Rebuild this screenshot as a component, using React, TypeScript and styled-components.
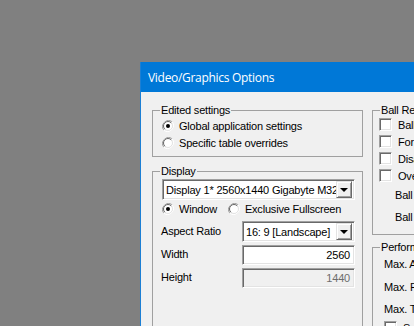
import styled, { createGlobalStyle } from "styled-components";

const GlobalStyle = createGlobalStyle`
    html, body {
        margin: 0;
        padding: 0;
        background: #808080;
        overflow: hidden;
    }
    * {
        box-sizing: border-box;
    }
`;

const Desktop = styled.div`
    width: 414px;
    height: 326px;
    padding: 62px 0 0 140px;
    overflow: hidden;
    font-family: "Liberation Sans", Arial, sans-serif;
    font-size: 11px;
    letter-spacing: -0.2px;
    color: #000;
`;

const Window = styled.div`
    width: 420px;
    height: 360px;
    display: flex;
    flex-direction: column;
    background: #f0f0f0;
    border-left: 1px solid #1c7fd4;
`;

const TitleBar = styled.div`
    height: 30px;
    flex: none;
    display: flex;
    align-items: center;
    padding-left: 7px;
    background: #0078d7;
    color: #fff;
    font-family: "Open Sans", "Noto Sans", sans-serif;
    font-size: 12px;
    letter-spacing: -0.3px;
`;

const Client = styled.div`
    display: flex;
    align-items: flex-start;
    gap: 9px;
    padding: 18px 0 0 11px;
`;

const Column = styled.div<{ width: number }>`
    width: ${p => p.width}px;
    flex: none;
    display: flex;
    flex-direction: column;
    gap: 14px;
`;

const RightColumn = styled(Column)`
    gap: 12px;
`;

const GroupBox = styled.div<{ pad?: string }>`
    position: relative;
    border: 1px solid #a0a0a0;
    padding: ${p => p.pad || "6px 7px 5px 9px"};
    display: flex;
    flex-direction: column;
`;

const Legend = styled.span`
    position: absolute;
    top: -7px;
    left: 7px;
    padding: 0 1px;
    line-height: 13px;
    background: #f0f0f0;
    white-space: nowrap;
`;

const OptionRow = styled.label<{ h?: number }>`
    display: flex;
    align-items: center;
    height: ${p => p.h || 17}px;
    gap: 5px;
    white-space: nowrap;
`;

const InlineOptions = styled.div`
    display: flex;
    gap: 11px;
`;

const Combo = styled.div<{ width: number }>`
    width: ${p => p.width}px;
    height: 21px;
    flex: none;
    display: flex;
    align-items: center;
    background: #fff;
    border-style: solid;
    border-width: 1px;
    border-color: #a0a0a0 #fff #fff #a0a0a0;
    box-shadow: inset 1px 1px 0 #696969, inset -1px -1px 0 #e3e3e3;
    padding: 2px 2px 2px 3px;
    overflow: hidden;
`;

const ComboText = styled.span`
    flex: 1;
    overflow: hidden;
    white-space: nowrap;
`;

const ComboButton = styled.span`
    width: 16px;
    height: 17px;
    flex: none;
    display: flex;
    align-items: center;
    justify-content: center;
    background: #f0f0f0;
    border-style: solid;
    border-width: 1px;
    border-color: #e3e3e3 #696969 #696969 #e3e3e3;
    box-shadow: inset 1px 1px 0 #fff, inset -1px -1px 0 #a0a0a0;

    &::after {
        content: "";
        border-left: 4px solid transparent;
        border-right: 4px solid transparent;
        border-top: 4px solid #000;
        margin-top: 1px;
    }
`;

const FieldGrid = styled.div`
    display: grid;
    grid-template-columns: 80px 113px;
    row-gap: 3px;
    margin-top: 4px;
    align-items: center;
`;

const FieldLabel = styled.span`
    margin-left: -1px;
    margin-bottom: 2px;
`;

const Edit = styled.div<{ disabled?: boolean }>`
    height: 20px;
    display: flex;
    align-items: center;
    justify-content: flex-end;
    padding-right: 4px;
    background: ${p => (p.disabled ? "#f0f0f0" : "#fff")};
    color: ${p => (p.disabled ? "#6d6d6d" : "#000")};
    border-style: solid;
    border-width: 1px;
    border-color: #a0a0a0 #fff #fff #a0a0a0;
    box-shadow: inset 1px 1px 0 #696969, inset -1px -1px 0 #e3e3e3;
`;

const CheckBox = styled.span`
    width: 13px;
    height: 13px;
    flex: none;
    background: #fff;
    border-style: solid;
    border-width: 1px;
    border-color: #a0a0a0 #fff #fff #a0a0a0;
    box-shadow: inset 1px 1px 0 #696969, inset -1px -1px 0 #e3e3e3;
`;

const CheckRow = styled(OptionRow)`
    gap: 6px;
`;

const TextRow = styled.div<{ h: number; indent: number }>`
    height: ${p => p.h}px;
    display: flex;
    align-items: center;
    padding-left: ${p => p.indent}px;
    white-space: nowrap;
`;

function Radio({ checked }: { checked?: boolean }) {
    return (
        <svg width="12" height="12" viewBox="0 0 12 12" style={{ flex: "none" }}>
            <path d="M10.2 1.8A6 6 0 0 0 1.8 10.2" fill="none" stroke="#a0a0a0" strokeWidth="1" />
            <path d="M1.8 10.2A6 6 0 0 0 10.2 1.8" fill="none" stroke="#ffffff" strokeWidth="1" />
            <circle cx="6" cy="6" r="4.5" fill="#fff" stroke="#e3e3e3" strokeWidth="1" />
            <path d="M9.2 2.8A4.5 4.5 0 0 0 2.8 9.2" fill="none" stroke="#696969" strokeWidth="1" />
            {checked && <circle cx="6" cy="6" r="2" fill="#000" />}
        </svg>
    );
}

export default function App() {
    return (
        <>
            <GlobalStyle />
            <Desktop>
                <Window>
                    <TitleBar>Video/Graphics Options</TitleBar>
                    <Client>
                        <Column width={211}>
                            <GroupBox>
                                <Legend>Edited settings</Legend>
                                <OptionRow>
                                    <Radio checked />
                                    Global application settings
                                </OptionRow>
                                <OptionRow>
                                    <Radio />
                                    Specific table overrides
                                </OptionRow>
                            </GroupBox>

                            <GroupBox pad="7px 7px 40px 9px">
                                <Legend>Display</Legend>
                                <Combo width={193}>
                                    <ComboText>Display 1* 2560x1440 Gigabyte M32U</ComboText>
                                    <ComboButton />
                                </Combo>
                                <InlineOptions>
                                    <OptionRow>
                                        <Radio checked />
                                        Window
                                    </OptionRow>
                                    <OptionRow>
                                        <Radio />
                                        Exclusive Fullscreen
                                    </OptionRow>
                                </InlineOptions>
                                <FieldGrid>
                                    <FieldLabel>Aspect Ratio</FieldLabel>
                                    <Combo width={113}>
                                        <ComboText>16: 9 [Landscape]</ComboText>
                                        <ComboButton />
                                    </Combo>
                                    <FieldLabel>Width</FieldLabel>
                                    <Edit>2560</Edit>
                                    <FieldLabel>Height</FieldLabel>
                                    <Edit disabled>1440</Edit>
                                </FieldGrid>
                            </GroupBox>
                        </Column>

                        <RightColumn width={200}>
                            <GroupBox pad="5px 7px 6px 6px">
                                <Legend>Ball Rendering</Legend>
                                <CheckRow><CheckBox />Ball Trails</CheckRow>
                                <CheckRow><CheckBox />Force Bloom</CheckRow>
                                <CheckRow><CheckBox />Disable Lighting</CheckRow>
                                <CheckRow><CheckBox />Overwrite Ball Image</CheckRow>
                                <TextRow h={22} indent={16}>Ball Image</TextRow>
                                <TextRow h={22} indent={16}>Ball Decal</TextRow>
                            </GroupBox>

                            <GroupBox pad="4px 7px 5px 11px">
                                <Legend>Performance</Legend>
                                <TextRow h={23} indent={0}>Max. Ambient Occlusion</TextRow>
                                <TextRow h={23} indent={0}>Max. Reflection Mode</TextRow>
                                <TextRow h={21} indent={0}>Max. Texture Dimension</TextRow>
                                <CheckRow><CheckBox />Sync</CheckRow>
                            </GroupBox>
                        </RightColumn>
                    </Client>
                </Window>
            </Desktop>
        </>
    );
}
